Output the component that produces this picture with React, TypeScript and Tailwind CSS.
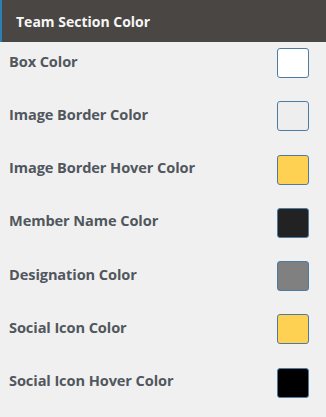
import React from "react";

const rows: { label: string; color: string }[] = [
  { label: "Box Color", color: "#ffffff" },
  { label: "Image Border Color", color: "#eeeeee" },
  { label: "Image Border Hover Color", color: "#ffd152" },
  { label: "Member Name Color", color: "#222222" },
  { label: "Designation Color", color: "#808080" },
  { label: "Social Icon Color", color: "#ffd152" },
  { label: "Social Icon Hover Color", color: "#000000" },
];

export default function App() {
  return (
    <div
      className="w-[326px] h-[417px] bg-[#f0f0f0] overflow-hidden"
      style={{ fontFamily: "'Open Sans', 'Noto Sans', sans-serif" }}
    >
      <div className="h-[42px] bg-[#4a4644] border-l-2 border-[#2f7fb6] flex items-center pl-[14px]">
        <span className="text-[#f6f6f6] font-bold text-[14px]">Team Section Color</span>
      </div>
      <div className="flex flex-col gap-[23.3px] pt-[6px] pl-[9px] pr-[17px]">
        {rows.map((r) => (
          <div key={r.label} className="flex items-center justify-between h-[30px]">
            <span className="text-[#50575e] font-bold text-[14.6px] tracking-[-0.1px] pb-[3px]">{r.label}</span>
            <div
              className="w-[32px] h-[30px] rounded-[3px] border border-[#4f7ba3]"
              style={{ backgroundColor: r.color }}
            />
          </div>
        ))}
      </div>
    </div>
  );
}
